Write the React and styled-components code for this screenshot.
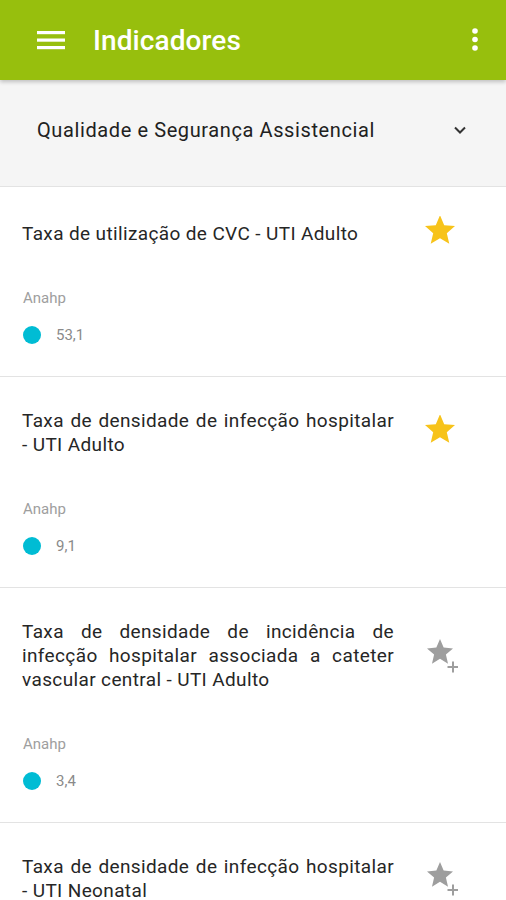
import React from 'react'
import styled, { createGlobalStyle } from 'styled-components'

const GlobalStyle = createGlobalStyle`
    html, body {
        margin: 0;
        padding: 0;
        background: #ffffff;
        font-family: Roboto, "Noto Sans", "Liberation Sans", sans-serif;
    }
`
const Page = styled.div`
    width: 506px;
    height: 900px;
    overflow: hidden;
    background: #ffffff;
`
const Toolbar = styled.header`
    height: 80px;
    background-color: #97bf0d;
    display: flex;
    align-items: center;
    padding: 0 26px 0 37px;
    box-sizing: border-box;
    position: relative;
    z-index: 1;
    box-shadow: 0 2px 4px rgba(0, 0, 0, 0.22);
`
const Title = styled.h1`
    margin: 0 0 0 28px;
    flex: 1;
    font-size: 28px;
    font-weight: 500;
    color: #ffffff;
    letter-spacing: 0.1px;
`
const IconButton = styled.div`
    display: flex;
    align-items: center;
    justify-content: center;
`
const Selector = styled.div`
    height: 107px;
    background: #f5f5f5;
    border-bottom: 1px solid #e3e3e3;
    display: flex;
    align-items: center;
    justify-content: space-between;
    padding: 0 39px 6px 37px;
    box-sizing: border-box;
`
const SelectorText = styled.span`
    font-size: 20px;
    letter-spacing: 0.6px;
    color: #212121;
`
const Card = styled.section`
    padding: 32px 48px 32px 22px;
    border-bottom: 1px solid #e3e3e3;
    &:first-of-type {
        padding-top: 35px;
    }
`
const CardHead = styled.div`
    display: flex;
    align-items: center;
    gap: 28px;
`
const CardTitle = styled.div`
    width: 372px;
    font-size: 19px;
    letter-spacing: 0.37px;
    line-height: 24px;
    color: #262626;
    text-align: justify;
`
const Star = styled.div`
    width: 36px;
    height: 24px;
    flex: none;
    display: flex;
    align-items: center;
    justify-content: center;
    & > svg {
        flex: none;
    }
`
const Source = styled.div`
    margin-top: 42px;
    font-size: 15px;
    line-height: 20px;
    color: #9e9e9e;
    padding-left: 1px;
`
const ValueRow = styled.div`
    margin-top: 18px;
    height: 18px;
    display: flex;
    align-items: center;
    gap: 15px;
    padding-left: 1px;
`
const Dot = styled.span`
    width: 18px;
    height: 18px;
    border-radius: 50%;
    background: ${(p) => p.$color};
`
const Value = styled.span`
    font-size: 15px;
    color: #8a8a8a;
`

const STAR = 'M12 17.27L18.18 21l-1.64-7.03L22 9.24l-7.19-.61L12 2 9.19 8.63 2 9.24l5.46 4.73L5.82 21z'

const MenuIcon = () => (
    <svg width="28" height="20" viewBox="0 0 28 20">
        <rect x="0" y="1" width="28" height="3.2" fill="#fff" />
        <rect x="0" y="8.5" width="28" height="3.2" fill="#fff" />
        <rect x="0" y="16" width="28" height="3.2" fill="#fff" />
    </svg>
)

const MoreIcon = () => (
    <svg width="10" height="24" viewBox="0 0 10 24">
        <circle cx="5" cy="3" r="2.8" fill="#fff" />
        <circle cx="5" cy="11.5" r="2.8" fill="#fff" />
        <circle cx="5" cy="20" r="2.8" fill="#fff" />
    </svg>
)

const Chevron = () => (
    <svg width="14" height="8" viewBox="0 0 14 8">
        <path d="M2 1.5l5 5 5-5" stroke="#333" strokeWidth="2" fill="none" />
    </svg>
)

const StarIcon = ({ fav }) => (
    <Star>
        {fav ? (
            <svg width="36" height="36" viewBox="0 2.5 24 24">
                <path d={STAR} fill="#f7c31a" />
            </svg>
        ) : (
            <svg width="36" height="36" viewBox="0 0 36 36">
                <path d={STAR} fill="#9e9e9e" transform="translate(2.4 -1.6) scale(1.3)" />
                <path d="M31 23.5v11M25.5 29h11" stroke="#9e9e9e" strokeWidth="2" />
            </svg>
        )}
    </Star>
)

const items = [
    { title: 'Taxa de utilização de CVC - UTI Adulto', value: '53,1', fav: true },
    { title: 'Taxa de densidade de infecção hospitalar - UTI Adulto', value: '9,1', fav: true },
    {
        title: 'Taxa de densidade de incidência de infecção hospitalar associada a cateter vascular central - UTI Adulto',
        value: '3,4',
        fav: false,
    },
    { title: 'Taxa de densidade de infecção hospitalar - UTI Neonatal', value: '12,0', fav: false },
]

export default function App() {
    return (
        <Page>
            <GlobalStyle />
            <Toolbar>
                <IconButton>
                    <MenuIcon />
                </IconButton>
                <Title>Indicadores</Title>
                <IconButton>
                    <MoreIcon />
                </IconButton>
            </Toolbar>
            <Selector>
                <SelectorText>Qualidade e Segurança Assistencial</SelectorText>
                <Chevron />
            </Selector>
            {items.map((item) => (
                <Card key={item.title}>
                    <CardHead>
                        <CardTitle>{item.title}</CardTitle>
                        <StarIcon fav={item.fav} />
                    </CardHead>
                    <Source>Anahp</Source>
                    <ValueRow>
                        <Dot $color="#00bcd4" />
                        <Value>{item.value}</Value>
                    </ValueRow>
                </Card>
            ))}
        </Page>
    )
}
